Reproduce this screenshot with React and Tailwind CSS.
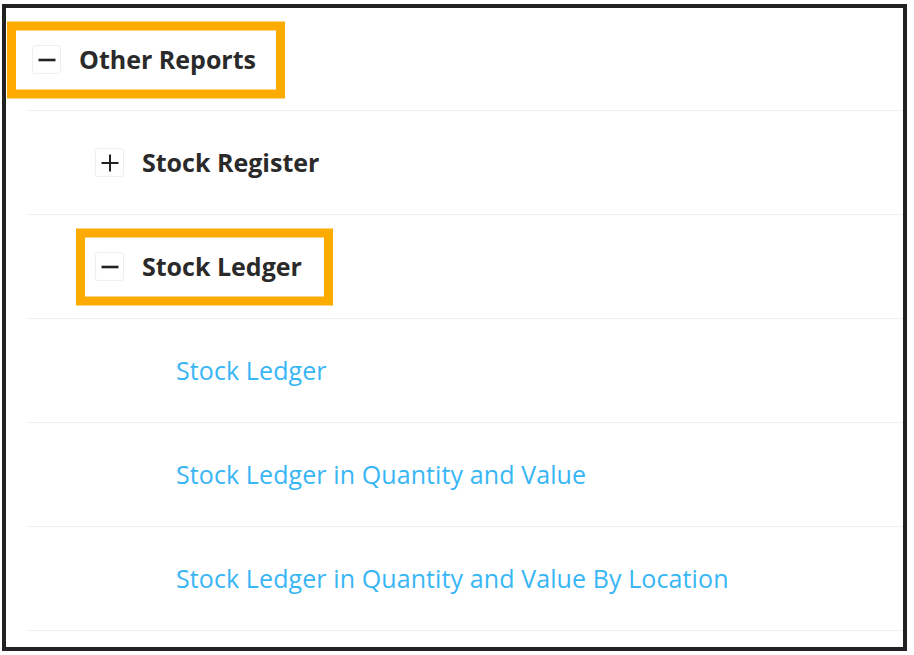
import React from "react";

const rows = [
  { label: "Other Reports", level: 1, icon: "minus", highlight: "w-[278px] left-[-19px]" },
  { label: "Stock Register", level: 2, icon: "plus" },
  { label: "Stock Ledger", level: 2, icon: "minus", highlight: "w-[257px] left-[50px]" },
  { label: "Stock Ledger", level: 3 },
  { label: "Stock Ledger in Quantity and Value", level: 3 },
  { label: "Stock Ledger in Quantity and Value By Location", level: 3 },
];

const ToggleIcon = ({ type }) => (
  <span className="flex h-[29px] w-[29px] shrink-0 items-center justify-center rounded-[3px] border border-[#efefef] bg-white">
    <svg width="20" height="20" viewBox="0 0 20 20">
      {type === "minus" ? (
        <path d="M1.5 10h17" stroke="#222" strokeWidth="2.6" />
      ) : (
        <path d="M1.5 10h17M10 1.5v17" stroke="#222" strokeWidth="2" />
      )}
    </svg>
  </span>
);

const Row = ({ row, first }) => {
  const indent = {
    1: "pl-[6px]",
    2: "pl-[69px]",
    3: "pl-[150px]",
  }[row.level];

  return (
    <div
      className={`relative flex items-center border-b border-[#f1f1f1] ${indent} ${
        first ? "h-[102px]" : "h-[104px]"
      }`}
    >
      {row.highlight && (
        <div
          className={`pointer-events-none absolute top-1/2 h-[77px] -translate-y-1/2 border-[9px] border-[#fdab00] ${row.highlight}`}
        />
      )}
      {row.level < 3 ? (
        <div className="flex items-center gap-[18px]">
          <ToggleIcon type={row.icon} />
          <span className="text-[25px] font-bold text-[#2a2a2a]">
            {row.label}
          </span>
        </div>
      ) : (
        <a className="text-[25px] tracking-[0.1px] text-[#38b6f5]" href="#">
          {row.label}
        </a>
      )}
    </div>
  );
};

export default function App() {
  return (
    <div
      className="h-[655px] w-[914px] overflow-hidden bg-white pl-[2px] pt-[4px]"
      style={{ fontFamily: '"Open Sans", "Noto Sans", sans-serif' }}
    >
      <div className="h-[647px] w-[905px] border-4 border-[#222] pl-[20px] pt-[1px]">
        {rows.map((row, i) => (
          <Row key={i} row={row} first={i === 0} />
        ))}
      </div>
    </div>
  );
}
